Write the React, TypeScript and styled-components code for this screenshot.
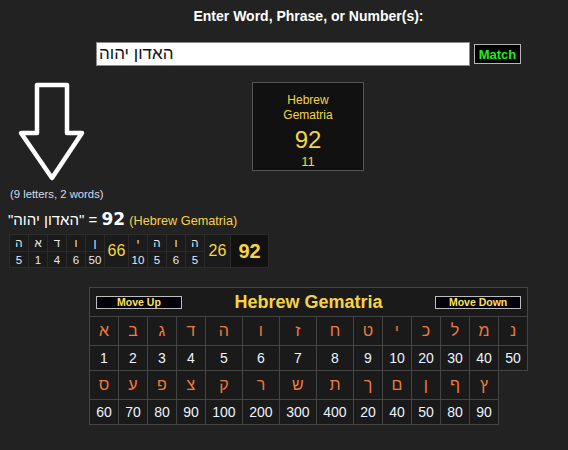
import React from 'react';
import styled, { createGlobalStyle } from 'styled-components';

const GlobalStyle = createGlobalStyle`
  html, body {
    background: #222;
    overflow: hidden;
  }
  body {
    margin: 8px;
    font-family: "Liberation Sans", Arial, sans-serif;
    color: #fff;
  }
`;

const Page = styled.div`
  display: flex;
  flex-direction: column;
`;

// the site centres its main column a little right of the window centre
const CenterBand = styled.div<{ $top?: number }>`
  display: flex;
  flex-direction: column;
  align-items: center;
  padding-left: 49px;
  margin-top: ${(p) => p.$top ?? 0}px;
`;

const Heading = styled.div`
  font-weight: bold;
  font-size: 14px;
  line-height: 16px;
  color: #fff;
`;

const SearchRow = styled.div`
  display: flex;
  align-items: center;
  gap: 4px;
  margin-top: 18px;
`;

const SearchInput = styled.input`
  width: 374px;
  height: 24px;
  box-sizing: border-box;
  border: 1px solid #8a8a8a;
  background: #fff;
  color: #111;
  font-family: "Liberation Sans", Arial, sans-serif;
  font-size: 17px;
  padding: 0 2px;
  outline: none;
`;

const MatchButton = styled.button`
  width: 47px;
  height: 20px;
  box-sizing: border-box;
  background: #000;
  border: 1px solid #b5b5b5;
  color: #22ee22;
  font-family: "Liberation Sans", Arial, sans-serif;
  font-weight: bold;
  font-size: 13px;
  padding: 0;
`;

const Middle = styled.div`
  display: grid;
  grid-template-columns: 244px 112px;
  align-items: start;
  margin-top: 16px;
`;

const ArrowCol = styled.div`
  display: flex;
  flex-direction: column;
  align-items: flex-start;
`;

const ArrowSvg = styled.svg`
  display: block;
  margin: -1px 0 0 9px;
`;

const LetterCount = styled.div`
  margin: 3px 0 0 2px;
  font-size: 11.3px;
  line-height: 13px;
  color: #d0dcea;
`;

const ResultBox = styled.div`
  width: 112px;
  height: 89px;
  box-sizing: border-box;
  border: 1px solid #555;
  background: #111;
  text-align: center;
  color: #f6d443;
  padding-top: 10px;
`;

const BoxTitle = styled.div`
  font-size: 12px;
  line-height: 15px;
`;

const BoxValue = styled.div<{ $size: number; $lh: number; $gap?: number }>`
  font-size: ${(p) => p.$size}px;
  line-height: ${(p) => p.$lh}px;
  margin-top: ${(p) => p.$gap ?? 0}px;
`;

const Equation = styled.div`
  margin-top: 9px;
  font-size: 15px;
  line-height: 18px;
  color: #fff;
  white-space: nowrap;
`;

const EqTotal = styled.span`
  font-family: "DejaVu Sans", Verdana, sans-serif;
  font-weight: bold;
  font-size: 17px;
`;

const EqCipher = styled.span`
  font-size: 12.7px;
  color: #f6d443;
`;

const Breakdown = styled.table`
  margin: 4px 0 0 1px;
  border-spacing: 1px;
  background: #2b2b2b;
  align-self: flex-start;
`;

const BCell = styled.td<{ $w?: number; $h?: number }>`
  padding: 0;
  width: ${(p) => p.$w ?? 18}px;
  height: ${(p) => p.$h ?? 16}px;
  background: #1b1b1b;
  text-align: center;
  vertical-align: middle;
  font-size: 11.5px;
  line-height: 12px;
  color: #e4e9f0;
`;

const SumCell = styled(BCell)<{ $big?: boolean }>`
  color: #f6d443;
  font-size: ${(p) => (p.$big ? 20 : 16)}px;
  font-weight: ${(p) => (p.$big ? 'bold' : 'normal')};
  background: ${(p) => (p.$big ? '#111' : '#1b1b1b')};
`;

const ChartTable = styled.table`
  width: 438px;
  table-layout: fixed;
  border-collapse: collapse;
`;

const HeaderCell = styled.th`
  height: 28px;
  padding: 0 6px;
  background: #1a1a1a;
  border: 1px solid #444;
`;

const HeaderBar = styled.div`
  display: flex;
  justify-content: space-between;
  align-items: center;
`;

const MoveButton = styled.button`
  width: 86px;
  height: 13px;
  box-sizing: border-box;
  padding: 0;
  background: #02020a;
  border: 1px solid #bdbdbd;
  color: #ffe066;
  font-family: "Liberation Sans", Arial, sans-serif;
  font-weight: bold;
  font-size: 10.5px;
  line-height: 11px;
`;

const ChartTitle = styled.span`
  font-size: 18px;
  font-weight: bold;
  color: #f6d443;
`;

const ChartCell = styled.td<{ $letter?: boolean }>`
  padding: 0;
  height: ${(p) => (p.$letter ? 28 : 24)}px;
  background: #1a1a1a;
  border: 1px solid #444;
  text-align: center;
  vertical-align: middle;
  font-size: ${(p) => (p.$letter ? 16 : 14)}px;
  color: ${(p) => (p.$letter ? '#ee7a3c' : '#eef3ff')};
`;

const colWidths = [29, 29, 29, 29, 37, 37, 37, 37, 29, 29, 29, 29, 29, 29];

const rowOne = [
  ['א', 1], ['ב', 2], ['ג', 3], ['ד', 4], ['ה', 5], ['ו', 6], ['ז', 7],
  ['ח', 8], ['ט', 9], ['י', 10], ['כ', 20], ['ל', 30], ['מ', 40], ['נ', 50],
] as const;

const rowTwo = [
  ['ס', 60], ['ע', 70], ['פ', 80], ['צ', 90], ['ק', 100], ['ר', 200], ['ש', 300],
  ['ת', 400], ['ך', 20], ['ם', 40], ['ן', 50], ['ף', 80], ['ץ', 90],
] as const;

const wordOne = [['ה', 5], ['א', 1], ['ד', 4], ['ו', 6], ['ן', 50]] as const;
const wordTwo = [['י', 10], ['ה', 5], ['ו', 6], ['ה', 5]] as const;

const Arrow = () => (
  <ArrowSvg width="70" height="104" viewBox="0 0 70 104">
    <polygon
      points="20,4 50,4 50,52 65,52 35,97 4,52 20,52"
      fill="none"
      stroke="#fff"
      strokeWidth="4.5"
      strokeLinejoin="round"
    />
  </ArrowSvg>
);

const App = () => {
  return (
    <Page>
      <GlobalStyle />
      <CenterBand>
        <Heading>Enter Word, Phrase, or Number(s):</Heading>
        <SearchRow>
          <SearchInput defaultValue="האדון יהוה" />
          <MatchButton>Match</MatchButton>
        </SearchRow>
      </CenterBand>

      <Middle>
        <ArrowCol>
          <Arrow />
          <LetterCount>(9 letters, 2 words)</LetterCount>
        </ArrowCol>
        <ResultBox>
          <BoxTitle>Hebrew</BoxTitle>
          <BoxTitle>Gematria</BoxTitle>
          <BoxValue $size={24} $lh={28} $gap={3}>92</BoxValue>
          <BoxValue $size={13} $lh={15}>11</BoxValue>
        </ResultBox>
      </Middle>

      <Equation>
        "<bdi>האדון יהוה</bdi>" = <EqTotal>92</EqTotal> <EqCipher>(Hebrew Gematria)</EqCipher>
      </Equation>

      <Breakdown>
        <tbody>
          <tr>
            {wordOne.map(([l], i) => (
              <BCell key={'a' + i}>{l}</BCell>
            ))}
            <SumCell rowSpan={2} $w={23}>66</SumCell>
            {wordTwo.map(([l], i) => (
              <BCell key={'b' + i}>{l}</BCell>
            ))}
            <SumCell rowSpan={2} $w={25}>26</SumCell>
            <SumCell rowSpan={2} $w={37} $big>92</SumCell>
          </tr>
          <tr>
            {wordOne.map(([, v], i) => (
              <BCell key={'c' + i} $h={15}>{v}</BCell>
            ))}
            {wordTwo.map(([, v], i) => (
              <BCell key={'d' + i} $h={15}>{v}</BCell>
            ))}
          </tr>
        </tbody>
      </Breakdown>

      <CenterBand $top={19}>
        <ChartTable>
          <colgroup>
            {colWidths.map((w, i) => (
              <col key={i} style={{ width: w }} />
            ))}
          </colgroup>
          <thead>
            <tr>
              <HeaderCell colSpan={14}>
                <HeaderBar>
                  <MoveButton>Move Up</MoveButton>
                  <ChartTitle>Hebrew Gematria</ChartTitle>
                  <MoveButton>Move Down</MoveButton>
                </HeaderBar>
              </HeaderCell>
            </tr>
          </thead>
          <tbody>
            <tr>
              {rowOne.map(([l], i) => (
                <ChartCell key={i} $letter>{l}</ChartCell>
              ))}
            </tr>
            <tr>
              {rowOne.map(([, v], i) => (
                <ChartCell key={i}>{v}</ChartCell>
              ))}
            </tr>
            <tr>
              {rowTwo.map(([l], i) => (
                <ChartCell key={i} $letter>{l}</ChartCell>
              ))}
            </tr>
            <tr>
              {rowTwo.map(([, v], i) => (
                <ChartCell key={i}>{v}</ChartCell>
              ))}
            </tr>
          </tbody>
        </ChartTable>
      </CenterBand>
    </Page>
  );
};

export default App;
